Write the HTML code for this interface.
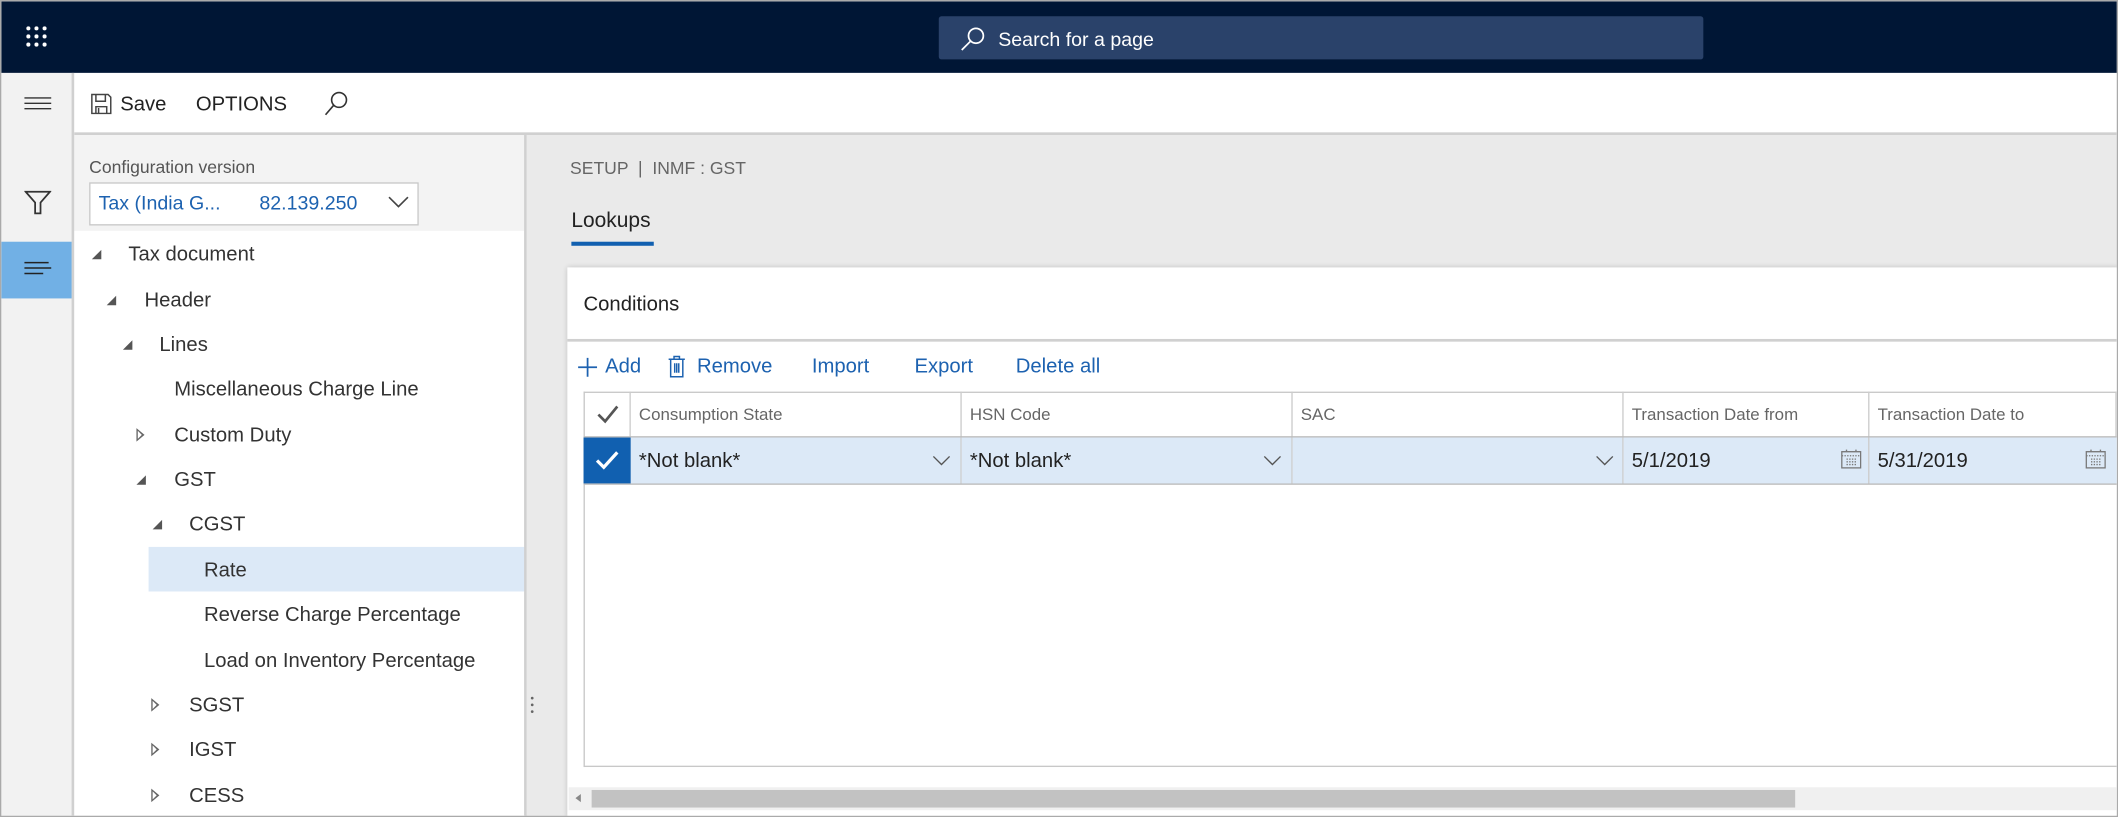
<!DOCTYPE html>
<html><head><meta charset="utf-8"><style>
*{box-sizing:border-box;margin:0;padding:0}
html,body{width:2118px;height:817px;overflow:hidden;background:#fff}
#w{position:absolute;left:0;top:0;width:1568px;height:605px;transform:scale(1.35077,1.3504);transform-origin:0 0;font-family:"Liberation Sans",sans-serif;color:#333;border:1px solid #aaa;overflow:hidden}
.a{position:absolute}
.t{position:absolute;white-space:nowrap;font-size:14px;line-height:18px}
.blue{color:#1d62b0}
.tri{position:absolute;width:0;height:0;border-left:7px solid transparent;border-bottom:7px solid #555}
.tro{position:absolute;width:0;height:0;border-top:5px solid transparent;border-bottom:5px solid transparent;border-left:6px solid #666}
.tro:after{content:"";position:absolute;left:-5px;top:-3px;border-top:3px solid transparent;border-bottom:3px solid transparent;border-left:3.5px solid #fff}
.hd{position:absolute;top:289px;height:34px;border-right:1px solid #ccc;font-size:12.5px;color:#666;line-height:34px;padding-left:6px;white-space:nowrap}
.dc{position:absolute;top:323px;height:34px;border-right:1px solid #ccc;font-size:15px;color:#222;line-height:36px;padding-left:6px;background:#dce9f7;white-space:nowrap}
</style></head><body><div id="w">
<!-- top bar -->
<div class="a" style="left:0;top:0;width:1568px;height:53px;background:#001635"></div>
<svg class="a" style="left:18px;top:18px" width="18" height="18" viewBox="0 0 18 18" fill="#fff"><circle cx="2" cy="2" r="1.5"/><circle cx="8" cy="2" r="1.5"/><circle cx="14" cy="2" r="1.5"/><circle cx="2" cy="8" r="1.5"/><circle cx="8" cy="8" r="1.5"/><circle cx="14" cy="8" r="1.5"/><circle cx="2" cy="14" r="1.5"/><circle cx="8" cy="14" r="1.5"/><circle cx="14" cy="14" r="1.5"/></svg>
<div class="a" style="left:694px;top:11px;width:566px;height:32px;background:#2a426a;border-radius:2px"></div>
<svg class="a" style="left:709px;top:19px" width="20" height="18" viewBox="0 0 20 18" fill="none" stroke="#fff" stroke-width="1.3"><circle cx="12.5" cy="6.5" r="5.5"/><path d="M8.5 10.5L2 17"/></svg>
<div class="t" style="left:738px;top:20px;color:#fff;font-size:14.5px">Search for a page</div>
<!-- rail -->
<div class="a" style="left:0;top:53px;width:54px;height:552px;background:#f2f2f2;border-right:2px solid #d0d0d0"></div>
<svg class="a" style="left:17px;top:70px" width="20" height="12" viewBox="0 0 20 12" stroke="#333" stroke-width="1"><path d="M0 1.5H20M0 5.5H20M0 9.5H20"/></svg>
<svg class="a" style="left:17px;top:139px" width="20" height="20" viewBox="0 0 20 20" fill="none" stroke="#333" stroke-width="1.3"><path d="M1 2H19L12 10V18H8V10Z"/></svg>
<div class="a" style="left:0;top:178px;width:52px;height:42px;background:#71b0e5"></div>
<svg class="a" style="left:17px;top:192px" width="20" height="14" viewBox="0 0 20 14" stroke="#222" stroke-width="1.1"><path d="M0 1.5H18M0 5.5H20M0 9.5H14"/></svg>
<!-- toolbar -->
<div class="a" style="left:54px;top:53px;width:1514px;height:46px;background:#fff;border-bottom:2px solid #d0d0d0"></div>
<svg class="a" style="left:66px;top:68px" width="16" height="16" viewBox="0 0 16 16" fill="none" stroke="#444" stroke-width="1.1"><path d="M1 1H13L15 3V15H1Z"/><path d="M4 1V6H11V1"/><path d="M4 15V10H12V15"/><path d="M6 11V15"/></svg>
<div class="t" style="left:88px;top:68px;font-size:15px;color:#222">Save</div>
<div class="t" style="left:144px;top:68px;font-size:15px;color:#222">OPTIONS</div>
<svg class="a" style="left:238px;top:66px" width="20" height="20" viewBox="0 0 20 20" fill="none" stroke="#333" stroke-width="1.2"><circle cx="12" cy="7" r="5.5"/><path d="M8 11L2 18"/></svg>
<!-- left pane -->
<div class="a" style="left:54px;top:99px;width:334px;height:71px;background:#f3f3f3"></div>
<div class="a" style="left:54px;top:170px;width:334px;height:435px;background:#fff"></div>
<div class="t" style="left:65px;top:114px;font-size:13px;color:#555">Configuration version</div>
<div class="a" style="left:65px;top:134px;width:244px;height:32px;background:#fff;border:1px solid #c8c8c8"></div>
<div class="t blue" style="left:72px;top:141px;font-size:14.5px">Tax (India G...</div>
<div class="t blue" style="left:191px;top:141px;font-size:14.5px">82.139.250</div>
<svg class="a" style="left:286px;top:144px" width="16" height="10" viewBox="0 0 16 10" fill="none" stroke="#444" stroke-width="1.2"><path d="M1 1L8 8L15 1"/></svg>
<div class="tri" style="left:67px;top:184px"></div><div class="t" style="left:94px;top:179px;font-size:15px">Tax document</div>
<div class="tri" style="left:78px;top:218px"></div><div class="t" style="left:106px;top:213px;font-size:15px">Header</div>
<div class="tri" style="left:90px;top:251px"></div><div class="t" style="left:117px;top:246px;font-size:15px">Lines</div>
<div class="t" style="left:128px;top:279px;font-size:15px">Miscellaneous Charge Line</div>
<div class="tro" style="left:100px;top:316px"></div><div class="t" style="left:128px;top:313px;font-size:15px">Custom Duty</div>
<div class="tri" style="left:100px;top:351px"></div><div class="t" style="left:128px;top:346px;font-size:15px">GST</div>
<div class="tri" style="left:112px;top:384px"></div><div class="t" style="left:139px;top:379px;font-size:15px">CGST</div>
<div class="a" style="left:109px;top:404px;width:279px;height:33px;background:#dce9f7"></div>
<div class="t" style="left:150px;top:413px;font-size:15px">Rate</div>
<div class="t" style="left:150px;top:446px;font-size:15px">Reverse Charge Percentage</div>
<div class="t" style="left:150px;top:480px;font-size:15px">Load on Inventory Percentage</div>
<div class="tro" style="left:111px;top:516px"></div><div class="t" style="left:139px;top:513px;font-size:15px">SGST</div>
<div class="tro" style="left:111px;top:549px"></div><div class="t" style="left:139px;top:546px;font-size:15px">IGST</div>
<div class="tro" style="left:111px;top:583px"></div><div class="t" style="left:139px;top:580px;font-size:15px">CESS</div>
<!-- splitter -->
<div class="a" style="left:387px;top:99px;width:2px;height:506px;background:#d0d0d0"></div>
<div class="a" style="left:389px;top:99px;width:1179px;height:506px;background:#eaeaea"></div>
<svg class="a" style="left:391px;top:514px" width="4" height="14" fill="#666"><circle cx="2" cy="2" r="1"/><circle cx="2" cy="7" r="1"/><circle cx="2" cy="12" r="1"/></svg>
<!-- right -->
<div class="t" style="left:421px;top:115px;font-size:13px;color:#666">SETUP &nbsp;|&nbsp; INMF : GST</div>
<div class="t" style="left:422px;top:154px;font-size:15.5px;color:#222">Lookups</div>
<div class="a" style="left:422px;top:178px;width:61px;height:3px;background:#1160b0"></div>
<div class="a" style="left:419px;top:197px;width:1149px;height:408px;background:#fff;box-shadow:0 0 4px rgba(0,0,0,.2)"></div>
<div class="t" style="left:431px;top:216px;font-size:15px;color:#222">Conditions</div>
<div class="a" style="left:419px;top:250px;width:1149px;height:2px;background:#d0d0d0"></div>
<svg class="a" style="left:426px;top:263px" width="16" height="16" stroke="#1d62b0" stroke-width="1.3"><path d="M8 1V15M1 8H15"/></svg>
<div class="t blue" style="left:447px;top:262px;font-size:15px">Add</div>
<svg class="a" style="left:493px;top:262px" width="14" height="17" viewBox="0 0 14 17" fill="none" stroke="#1d62b0" stroke-width="1.1"><path d="M1 3H13M5 3V1H9V3M2.5 3V16H11.5V3M5.5 6V13M7 6V13M8.5 6V13"/></svg>
<div class="t blue" style="left:515px;top:262px;font-size:15px">Remove</div>
<div class="t blue" style="left:600px;top:262px;font-size:15px">Import</div>
<div class="t blue" style="left:676px;top:262px;font-size:15px">Export</div>
<div class="t blue" style="left:751px;top:262px;font-size:15px">Delete all</div>
<!-- grid -->
<div class="a" style="left:431px;top:289px;width:1137px;height:278px;border:1px solid #c8c8c8;border-right:none"></div>
<div class="hd" style="left:431px;width:35px"></div>
<svg class="a" style="left:441px;top:299px" width="16" height="14" fill="none" stroke="#555" stroke-width="2"><path d="M1 7L6 12L15 1"/></svg>
<div class="hd" style="left:466px;width:245px">Consumption State</div>
<div class="hd" style="left:711px;width:245px">HSN Code</div>
<div class="hd" style="left:956px;width:245px">SAC</div>
<div class="hd" style="left:1201px;width:182px">Transaction Date from</div>
<div class="hd" style="left:1383px;width:183px">Transaction Date to</div>
<div class="a" style="left:431px;top:322px;width:1137px;height:1px;background:#bbb"></div>
<div class="a" style="left:431px;top:323px;width:35px;height:34px;background:#1160b0"></div>
<svg class="a" style="left:440px;top:332px" width="18" height="16" fill="none" stroke="#fff" stroke-width="2.4"><path d="M1 8L6 13L16 2"/></svg>
<div class="dc" style="left:466px;width:245px">*Not blank*</div>
<div class="dc" style="left:711px;width:245px">*Not blank*</div>
<div class="dc" style="left:956px;width:245px"></div>
<div class="dc" style="left:1201px;width:182px">5/1/2019</div>
<div class="dc" style="left:1383px;width:185px">5/31/2019</div>
<div class="a" style="left:431px;top:357px;width:1137px;height:1px;background:#bbb"></div>
<svg class="a" style="left:689px;top:336px" width="14" height="9" fill="none" stroke="#555" stroke-width="1"><path d="M1 1L7 7L13 1"/></svg>
<svg class="a" style="left:934px;top:336px" width="14" height="9" fill="none" stroke="#555" stroke-width="1"><path d="M1 1L7 7L13 1"/></svg>
<svg class="a" style="left:1180px;top:336px" width="14" height="9" fill="none" stroke="#555" stroke-width="1"><path d="M1 1L7 7L13 1"/></svg>
<svg class="a" style="left:1362px;top:331px" width="15" height="15" fill="none" stroke="#777" stroke-width="1"><rect x="0.5" y="2.5" width="14" height="12"/><path d="M0.5 5.5H14.5M4 1V3M11 1V3M4 8H11M4 10H11M4 12H11" stroke-dasharray="1 1"/></svg>
<svg class="a" style="left:1543px;top:331px" width="15" height="15" fill="none" stroke="#777" stroke-width="1"><rect x="0.5" y="2.5" width="14" height="12"/><path d="M0.5 5.5H14.5M4 1V3M11 1V3M4 8H11M4 10H11M4 12H11" stroke-dasharray="1 1"/></svg>
<!-- scrollbar -->
<div class="a" style="left:420px;top:582px;width:1148px;height:17px;background:#f0f0f0"></div>
<div class="a" style="left:437px;top:584px;width:891px;height:13px;background:#c2c2c2"></div>
<div class="a" style="left:425px;top:587px;width:0;height:0;border-top:3.5px solid transparent;border-bottom:3.5px solid transparent;border-right:4px solid #888"></div>
</div></body></html>
